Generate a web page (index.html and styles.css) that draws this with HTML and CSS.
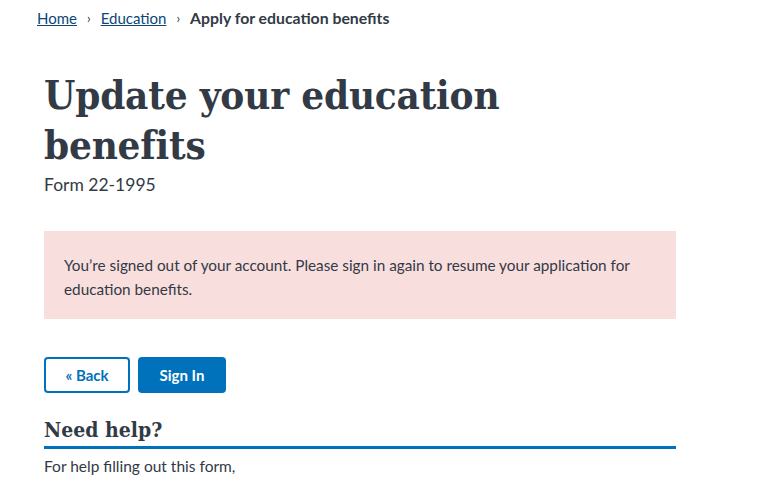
FILE: index.html
```html
<!DOCTYPE html>
<html lang="en">
<head>
<meta charset="utf-8">
<title>Update your education benefits</title>
<link rel="stylesheet" href="styles.css">
</head>
<body>
<nav class="breadcrumbs">
  <a href="#">Home</a><span class="sep">›</span><a href="#">Education</a><span class="sep">›</span><span class="current">Apply for education benefits</span>
</nav>
<main class="content">
  <h1 class="title">Update your education benefits</h1>
  <div class="subtitle">Form 22-1995</div>
  <div class="alert">
    <p>You’re signed out of your account. Please sign in again to resume your application for education benefits.</p>
  </div>
  <div class="actions">
    <button class="btn btn-outline">« Back</button>
    <button class="btn btn-primary">Sign In</button>
  </div>
  <h2 class="help-title">Need help?</h2>
  <p class="help-text">For help filling out this form,</p>
</main>
</body>
</html>
```
FILE: styles.css
```css
html, body {
  margin: 0;
  padding: 0;
  background: #ffffff;
}
body {
  font-family: "Lato", "Noto Sans", sans-serif;
  color: #323a45;
  font-size: 16px;
}
.breadcrumbs {
  padding: 6px 0 0 37px;
  height: 24px;
  font-size: 15px;
  line-height: 22px;
  display: flex;
  align-items: center;
}
.breadcrumbs a {
  color: #0b4778;
  text-decoration: underline;
}
.breadcrumbs .sep {
  margin: 0 10px;
  font-size: 13px;
}
.breadcrumbs .current {
  font-weight: bold;
  font-size: 15.8px;
  color: #323a45;
}
.content {
  padding: 0 0 0 44px;
  width: 632px;
}
.title {
  font-family: "DejaVu Serif Condensed", "DejaVu Serif", serif;
  font-weight: bold;
  font-size: 40px;
  line-height: 50px;
  margin: 40px 0 0 0;
  width: 470px;
  letter-spacing: -0.2px;
}
.subtitle {
  font-size: 17.5px;
  line-height: 24px;
  margin-top: 3px;
}
.alert {
  background: #f9dede;
  margin-top: 34px;
  padding: 22px 20px 18px 20px;
  height: 48px;
}
.alert p {
  margin: 0;
  font-size: 15.3px;
  line-height: 24px;
}
.actions {
  display: flex;
  gap: 8px;
  margin-top: 38px;
}
.btn {
  font-family: "Lato", "Noto Sans", sans-serif;
  font-weight: bold;
  font-size: 15px;
  height: 36px;
  border-radius: 4px;
  padding: 0;
  cursor: pointer;
}
.btn-outline {
  width: 86px;
  background: #ffffff;
  color: #0071bb;
  border: 2px solid #0071bb;
}
.btn-primary {
  width: 88px;
  background: #0071bb;
  color: #ffffff;
  border: none;
}
.help-title {
  font-family: "DejaVu Serif Condensed", "DejaVu Serif", serif;
  font-weight: bold;
  font-size: 21px;
  line-height: 28px;
  margin: 23px 0 0 0;
  padding-bottom: 2px;
  border-bottom: 3px solid #0071bb;
}
.help-text {
  margin: 5px 0 0 0;
  font-size: 15.5px;
  line-height: 24px;
}
```
